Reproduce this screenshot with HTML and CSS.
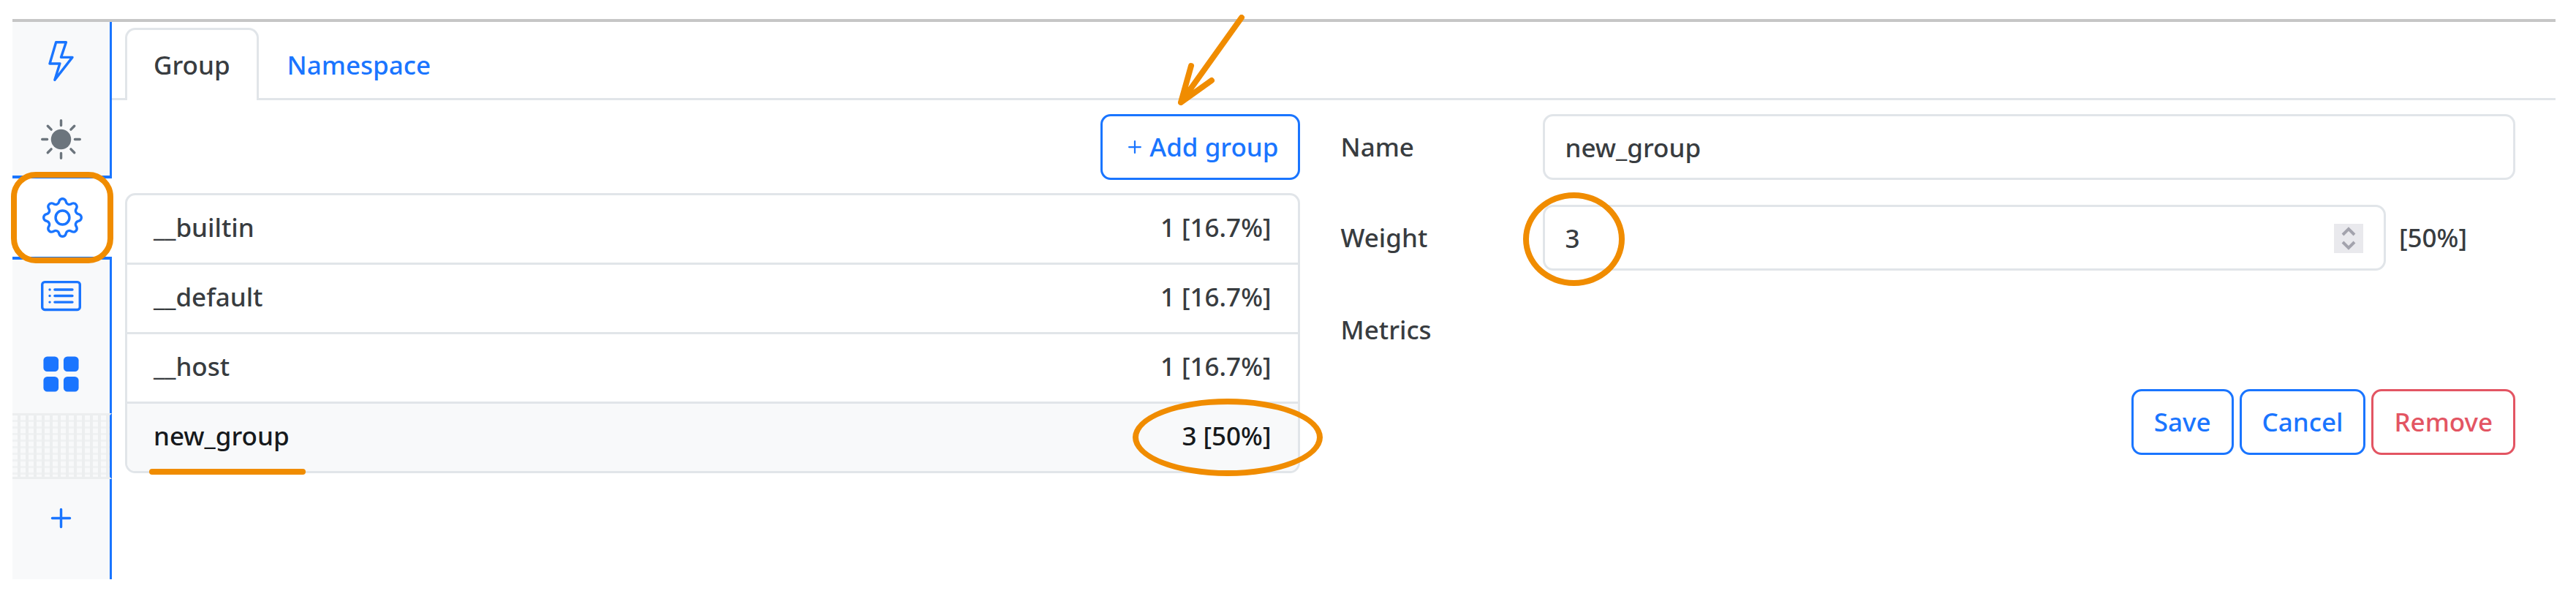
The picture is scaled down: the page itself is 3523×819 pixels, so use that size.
FILE: index.html
```html
<!DOCTYPE html>
<html lang="en">
<head>
<meta charset="utf-8">
<title>Groups</title>
<link rel="stylesheet" href="styles.css">
</head>
<body>
<div class="app">
  <nav class="sidebar" aria-label="Sections">
    <button class="side-item" type="button" aria-label="Activity">
      <svg class="icon" viewBox="0 0 16 16"><path d="M5.52.359A.5.5 0 0 1 6 0h4a.5.5 0 0 1 .474.658L8.694 6H12.5a.5.5 0 0 1 .395.807l-7 9a.5.5 0 0 1-.873-.454L6.823 9.5H3.5a.5.5 0 0 1-.48-.641l2.5-8.5zM6.374 1 4.168 8.5H7.5a.5.5 0 0 1 .478.647L6.78 13.04 11.478 7H8a.5.5 0 0 1-.474-.658L9.306 1z"/></svg>
    </button>
    <button class="side-item muted" type="button" aria-label="Theme">
      <svg class="icon" viewBox="0 0 16 16"><circle cx="8" cy="8" r="4"/><path class="rays" d="M8 .5v2M8 13.500v2M.5 8h2M13.500 8h2M2.700 2.700l1.400 1.400M11.900 11.900l1.400 1.400M2.700 13.300l1.400-1.400M11.900 4.100l1.400-1.400"/></svg>
    </button>
    <button class="side-item active" type="button" aria-label="Settings" aria-current="page">
      <svg class="icon" viewBox="0 0 16 16"><path d="M8 4.754a3.246 3.246 0 1 0 0 6.492 3.246 3.246 0 0 0 0-6.492M5.754 8a2.246 2.246 0 1 1 4.492 0 2.246 2.246 0 0 1-4.492 0"/><path d="M9.796 1.343c-.527-1.790-3.065-1.790-3.592 0l-.094.319a.873.873 0 0 1-1.255.520l-.292-.160c-1.640-.892-3.433.902-2.540 2.541l.159.292a.873.873 0 0 1-.520 1.255l-.319.094c-1.790.527-1.790 3.065 0 3.592l.319.094a.873.873 0 0 1 .520 1.255l-.160.292c-.892 1.640.901 3.434 2.541 2.540l.292-.159a.873.873 0 0 1 1.255.520l.094.319c.527 1.790 3.065 1.790 3.592 0l.094-.319a.873.873 0 0 1 1.255-.520l.292.160c1.640.893 3.434-.902 2.540-2.541l-.159-.292a.873.873 0 0 1 .520-1.255l.319-.094c1.790-.527 1.790-3.065 0-3.592l-.319-.094a.873.873 0 0 1-.520-1.255l.160-.292c.893-1.640-.902-3.433-2.541-2.540l-.292.159a.873.873 0 0 1-1.255-.520zm-2.633.283c.246-.835 1.428-.835 1.674 0l.094.319a1.873 1.873 0 0 0 2.693 1.115l.291-.160c.764-.415 1.600.420 1.184 1.185l-.159.292a1.873 1.873 0 0 0 1.116 2.692l.318.094c.835.246.835 1.428 0 1.674l-.319.094a1.873 1.873 0 0 0-1.115 2.693l.160.291c.415.764-.420 1.600-1.185 1.184l-.291-.159a1.873 1.873 0 0 0-2.693 1.116l-.094.318c-.246.835-1.428.835-1.674 0l-.094-.319a1.873 1.873 0 0 0-2.692-1.115l-.292.160c-.764.415-1.600-.420-1.184-1.185l.159-.291A1.873 1.873 0 0 0 1.945 8.930l-.319-.094c-.835-.246-.835-1.428 0-1.674l.319-.094A1.873 1.873 0 0 0 3.060 4.377l-.160-.292c-.415-.764.420-1.600 1.185-1.184l.292.159a1.873 1.873 0 0 0 2.692-1.115z"/></svg>
      <span class="mark mark-box"></span>
    </button>
    <button class="side-item" type="button" aria-label="List">
      <svg class="icon" viewBox="0 0 16 16"><path d="M14.500 3a.5.5 0 0 1 .5.5v9a.5.5 0 0 1-.5.5h-13a.5.5 0 0 1-.5-.5v-9a.5.5 0 0 1 .5-.5zm-13-1A1.500 1.500 0 0 0 0 3.500v9A1.500 1.500 0 0 0 1.500 14h13a1.500 1.500 0 0 0 1.500-1.500v-9A1.500 1.500 0 0 0 14.500 2z"/><path d="M5 8a.5.5 0 0 1 .5-.5h7a.5.5 0 0 1 0 1h-7A.5.5 0 0 1 5 8m0-2.500a.5.5 0 0 1 .5-.5h7a.5.5 0 0 1 0 1h-7a.5.5 0 0 1-.5-.5m0 5a.5.5 0 0 1 .5-.5h7a.5.5 0 0 1 0 1h-7a.5.5 0 0 1-.5-.5m-1-5a.5.5 0 1 1-1 0 .5.5 0 0 1 1 0M4 8a.5.5 0 1 1-1 0 .5.5 0 0 1 1 0m0 2.500a.5.5 0 1 1-1 0 .5.5 0 0 1 1 0"/></svg>
    </button>
    <button class="side-item" type="button" aria-label="Dashboard">
      <svg class="icon" viewBox="0 0 16 16"><rect x="1" y="1" width="6" height="6" rx="1.500"/><rect x="9" y="1" width="6" height="6" rx="1.500"/><rect x="1" y="9" width="6" height="6" rx="1.500"/><rect x="9" y="9" width="6" height="6" rx="1.500"/></svg>
    </button>
    <div class="side-slot"></div>
    <button class="side-item" type="button" aria-label="Add section">
      <svg class="icon" viewBox="0 0 16 16"><path d="M8 4a.5.5 0 0 1 .5.5v3h3a.5.5 0 0 1 0 1h-3v3a.5.5 0 0 1-1 0v-3h-3a.5.5 0 0 1 0-1h3v-3A.5.5 0 0 1 8 4"/></svg>
    </button>
    <div class="side-rest"></div>
  </nav>

  <main class="main">
    <div class="tabs" role="tablist">
      <button class="tab selected" type="button" role="tab" aria-selected="true">Group</button>
      <button class="tab" type="button" role="tab" aria-selected="false">Namespace</button>
    </div>

    <div class="columns">
      <section class="groups">
        <div class="toolbar">
          <button class="btn btn-add" type="button">
            <svg class="plus" viewBox="0 0 16 16"><path d="M8 4a.5.5 0 0 1 .5.5v3h3a.5.5 0 0 1 0 1h-3v3a.5.5 0 0 1-1 0v-3h-3a.5.5 0 0 1 0-1h3v-3A.5.5 0 0 1 8 4"/></svg>
            Add group
          </button>
          <svg class="arrow" viewBox="0 0 92 124"><path d="M87 4 4 120M18 70 4 120 46 90"/></svg>
        </div>
        <ul class="list">
          <li class="row"><span>__builtin</span><span>1 [16.7%]</span></li>
          <li class="row"><span>__default</span><span>1 [16.7%]</span></li>
          <li class="row"><span>__host</span><span>1 [16.7%]</span></li>
          <li class="row current"><span class="anchor">new_group<span class="mark-line"></span></span><span class="anchor">3 [50%]<span class="mark mark-oval"></span></span></li>
        </ul>
      </section>

      <form class="details">
        <div class="field">
          <label for="name">Name</label>
          <input class="input" id="name" type="text" value="new_group">
        </div>
        <div class="field">
          <label for="weight">Weight</label>
          <div class="weight">
            <div class="number">
              <input class="input" id="weight" type="number" value="3">
              <svg class="spinner" viewBox="0 0 40 40"><path d="M12 15l8-8 8 8M12 25l8 8 8-8"/></svg>
              <span class="mark mark-circle"></span>
            </div>
            <span class="share">[50%]</span>
          </div>
        </div>
        <div class="field field-static">
          <span>Metrics</span>
        </div>
        <div class="actions">
          <button class="btn" type="button">Save</button>
          <button class="btn" type="button">Cancel</button>
          <button class="btn btn-danger" type="button">Remove</button>
        </div>
      </form>
    </div>
  </main>
</div>
</body>
</html>
```

FILE: styles.css
```css
:root {
  --blue: #1a75ff;
  --red: #e35563;
  --line: #e1e5e9;
  --text: #383c40;
  --mark: #f08c00;
}

* {
  box-sizing: border-box;
}

body {
  margin: 0;
  padding: 26px 28px 27px 17px;
  background: #fff;
  color: var(--text);
  font: 500 35px/52px "Noto Sans", sans-serif;
}

button,
input {
  font: inherit;
  color: inherit;
}

.app {
  display: flex;
  min-height: calc(100vh - 53px);
  border-top: 4px solid #c6c6c6;
}

/* Sidebar */
.sidebar {
  display: flex;
  flex-direction: column;
  flex: none;
  width: 136px;
}

.side-item,
.side-slot,
.side-rest {
  border: 0;
  border-right: 3px solid var(--blue);
  background-color: #f8f9fa;
}

.side-item {
  display: flex;
  align-items: center;
  justify-content: center;
  height: 107px;
  padding: 0;
  color: var(--blue);
}

.side-item.muted {
  color: #6c757d;
}

.side-item.active {
  position: relative;
  height: 115px;
  margin: -4px 0;
  border: solid var(--blue);
  border-width: 4px 0;
  background: #fff;
}

.side-slot {
  height: 90px;
  border-top: 3px solid #eceeef;
  border-bottom: 3px solid #eceeef;
  background-image:
    repeating-linear-gradient(90deg, transparent 0 7px, #eceeef 7px 11px),
    repeating-linear-gradient(transparent 0 6px, #f0f2f3 6px 9px);
}

.side-rest {
  flex: 1;
}

.icon {
  width: 55px;
  height: 55px;
  fill: currentColor;
}

.rays {
  fill: none;
  stroke: currentColor;
  stroke-width: 1;
  stroke-linecap: round;
}

/* Tabs */
.main {
  flex: 1;
  min-width: 0;
}

.tabs {
  display: flex;
  padding: 8px 18px 0;
  border-bottom: 3px solid var(--line);
}

.tab {
  height: 99px;
  margin-bottom: -3px;
  padding: 0 36px;
  border: 3px solid transparent;
  border-bottom: 0;
  border-radius: 14px 14px 0 0;
  background: none;
  color: var(--blue);
}

.tab.selected {
  border-color: var(--line);
  background: #fff;
  color: var(--text);
}

/* Content */
.columns {
  display: grid;
  grid-template-columns: 1fr 1fr;
  gap: 56px;
  padding: 19px 55px 0 18px;
}

.toolbar {
  position: relative;
  display: flex;
  justify-content: flex-end;
  margin-bottom: 18px;
}

.btn {
  display: flex;
  align-items: center;
  height: 90px;
  padding: 0 28px;
  border: 3px solid var(--blue);
  border-radius: 14px;
  background: #fff;
  color: var(--blue);
}

.btn-add {
  gap: 2px;
  padding: 0 26px;
}

.btn-danger {
  border-color: var(--red);
  color: var(--red);
}

.plus {
  width: 36px;
  height: 36px;
  fill: currentColor;
}

.list {
  margin: 0;
  padding: 0;
  border: 3px solid var(--line);
  border-radius: 14px;
  list-style: none;
}

.row {
  display: flex;
  justify-content: space-between;
  padding: 18px 36px 22px;
}

.row + .row {
  border-top: 3px solid var(--line);
}

.row.current {
  border-radius: 0 0 11px 11px;
  background: #f8f9fa;
  color: #16191c;
}

/* Form */
.details {
  display: flex;
  flex-direction: column;
}

.field {
  display: grid;
  grid-template-columns: 276px 1fr;
  align-items: center;
  min-height: 90px;
  margin-bottom: 34px;
}

.field-static {
  min-height: 94px;
}

.input {
  width: 100%;
  height: 90px;
  padding: 0 28px;
  border: 3px solid var(--line);
  border-radius: 14px;
  background: #fff;
  appearance: textfield;
}

.input::-webkit-inner-spin-button {
  appearance: none;
}

.weight {
  display: flex;
  align-items: center;
}

.number {
  position: relative;
  flex: 1;
}

.spinner {
  position: absolute;
  top: 26px;
  right: 31px;
  width: 40px;
  height: 40px;
  background: #e9e9ed;
  fill: none;
  stroke: #a3a3ad;
  stroke-width: 4;
}

.share {
  width: 177px;
  padding-left: 18px;
}

.actions {
  display: flex;
  justify-content: flex-end;
  gap: 8px;
}

/* Highlights drawn over the interface */
.anchor {
  position: relative;
}

.mark {
  position: absolute;
  border: 8px solid var(--mark);
  pointer-events: none;
}

.mark-box {
  inset: -9px -2px;
  border-radius: 34px;
}

.mark-oval {
  top: -25px;
  right: -70px;
  width: 260px;
  height: 106px;
  border-radius: 50%;
}

.mark-circle {
  top: -17px;
  left: -27px;
  width: 139px;
  height: 128px;
  border-radius: 50%;
}

.mark-line {
  position: absolute;
  top: 71px;
  right: -22px;
  left: -6px;
  height: 8px;
  border-radius: 4px;
  background: var(--mark);
}

.arrow {
  position: absolute;
  right: 75px;
  bottom: 102px;
  width: 92px;
  height: 124px;
  fill: none;
  stroke: var(--mark);
  stroke-width: 8;
  stroke-linecap: round;
  stroke-linejoin: round;
  pointer-events: none;
}
```
